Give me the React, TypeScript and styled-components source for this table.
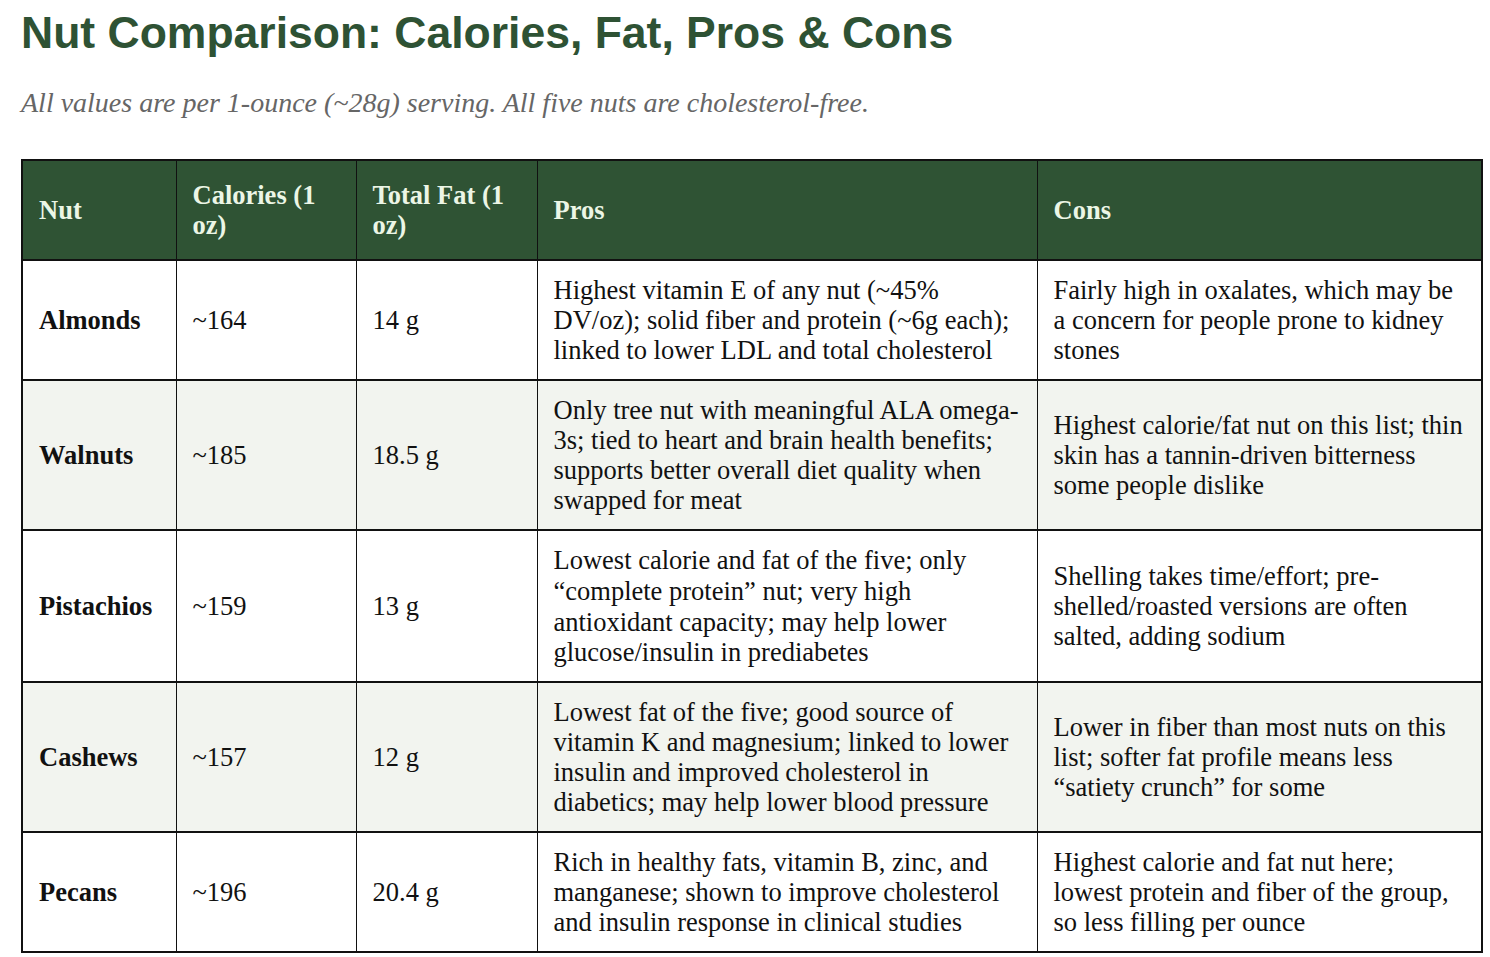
import React from "react";
import styled, { createGlobalStyle } from "styled-components";

const Global = createGlobalStyle`
  html, body { margin: 0; padding: 0; background: #ffffff; }
  body { font-family: "Liberation Serif", "Times New Roman", serif; color: #1a1a1a; }
`;

const Page = styled.main`
  padding: 8px 9px 0 21px;
`;

const Title = styled.h1`
  margin: 0;
  font-family: "Liberation Sans", Arial, sans-serif;
  font-size: 44.5px;
  line-height: 50px;
  font-weight: 700;
  color: #2e5234;
`;

const Subtitle = styled.p`
  margin: 30px 0 0;
  font-family: "Liberation Serif", "Times New Roman", serif;
  font-style: italic;
  font-size: 28px;
  line-height: 30px;
  color: #666666;
`;

const Table = styled.table`
  margin-top: 41px;
  width: 1460px;
  table-layout: fixed;
  border-collapse: collapse;
  border: 2px solid #111111;
  font-family: "Liberation Serif", "Times New Roman", serif;
  font-size: 26.5px;
  line-height: 30px;
`;

const HeadCell = styled.th`
  background: #2f5334;
  color: #ecf6e6;
  font-weight: 700;
  text-align: left;
  vertical-align: middle;
  padding: 19px 16px;
  border: 1px solid #111111;
`;

const Row = styled.tr<{ $alt: boolean }>`
  background: ${(p) => (p.$alt ? "#f2f4ef" : "#ffffff")};
  border-top: 2px solid #111111;
`;

const Cell = styled.td<{ $bold?: boolean }>`
  padding: 14px 16px;
  vertical-align: middle;
  border: 1px solid #111111;
  font-weight: ${(p) => (p.$bold ? 700 : 400)};
  color: #111111;
`;

const Quote = styled.span`
  line-height: 32px;
`;

const cols = [154, 180, 181, 500, 445];
const headers = ["Nut", "Calories (1 oz)", "Total Fat (1 oz)", "Pros", "Cons"];

type NutRow = { nut: string; cal: string; fat: string; pros: React.ReactNode; cons: React.ReactNode };

const rows: NutRow[] = [
  {
    nut: "Almonds",
    cal: "~164",
    fat: "14 g",
    pros: "Highest vitamin E of any nut (~45% DV/oz); solid fiber and protein (~6g each); linked to lower LDL and total cholesterol",
    cons: "Fairly high in oxalates, which may be a concern for people prone to kidney stones",
  },
  {
    nut: "Walnuts",
    cal: "~185",
    fat: "18.5 g",
    pros: "Only tree nut with meaningful ALA omega-3s; tied to heart and brain health benefits; supports better overall diet quality when swapped for meat",
    cons: "Highest calorie/fat nut on this list; thin skin has a tannin-driven bitterness some people dislike",
  },
  {
    nut: "Pistachios",
    cal: "~159",
    fat: "13 g",
    pros: (
      <>
        Lowest calorie and fat of the five; only <Quote>{"\u201ccomplete protein\u201d"}</Quote> nut; very high antioxidant
        capacity; may help lower glucose/insulin in prediabetes
      </>
    ),
    cons: "Shelling takes time/effort; pre-shelled/roasted versions are often salted, adding sodium",
  },
  {
    nut: "Cashews",
    cal: "~157",
    fat: "12 g",
    pros: "Lowest fat of the five; good source of vitamin K and magnesium; linked to lower insulin and improved cholesterol in diabetics; may help lower blood pressure",
    cons: "Lower in fiber than most nuts on this list; softer fat profile means less \u201csatiety crunch\u201d for some",
  },
  {
    nut: "Pecans",
    cal: "~196",
    fat: "20.4 g",
    pros: "Rich in healthy fats, vitamin B, zinc, and manganese; shown to improve cholesterol and insulin response in clinical studies",
    cons: "Highest calorie and fat nut here; lowest protein and fiber of the group, so less filling per ounce",
  },
];

export default function App() {
  return (
    <Page>
      <Global />
      <Title>Nut Comparison: Calories, Fat, Pros &amp; Cons</Title>
      <Subtitle>All values are per 1-ounce (~28g) serving. All five nuts are cholesterol-free.</Subtitle>
      <Table>
        <colgroup>
          {cols.map((w, i) => (
            <col key={i} style={{ width: w }} />
          ))}
        </colgroup>
        <thead>
          <tr>
            {headers.map((h) => (
              <HeadCell key={h}>{h}</HeadCell>
            ))}
          </tr>
        </thead>
        <tbody>
          {rows.map((r, i) => (
            <Row key={r.nut} $alt={i % 2 === 1}>
              <Cell $bold>{r.nut}</Cell>
              <Cell>{r.cal}</Cell>
              <Cell>{r.fat}</Cell>
              <Cell>{r.pros}</Cell>
              <Cell>{r.cons}</Cell>
            </Row>
          ))}
        </tbody>
      </Table>
    </Page>
  );
}
